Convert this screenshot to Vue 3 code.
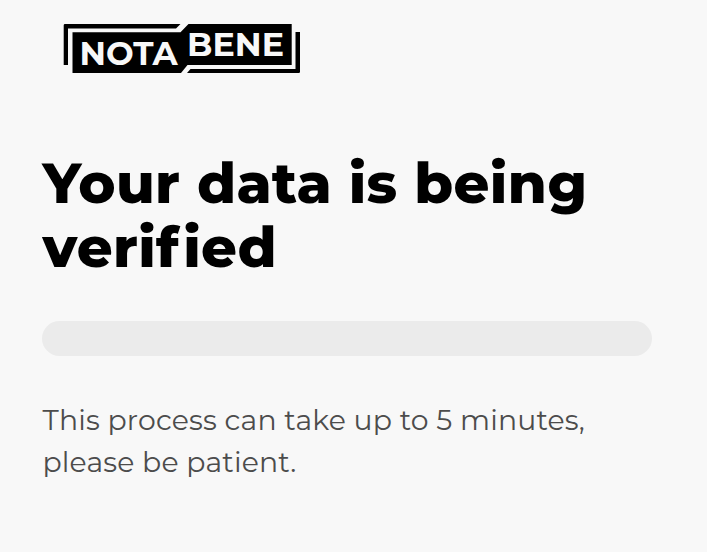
<script setup>
</script>

<template>
  <main class="page">
    <svg class="logo" width="238" height="52" viewBox="62 22 238 52" role="img" aria-label="Nota Bene">
      <path class="ink" d="M63.7 25.2Q63.7 24 65 24H180.5L176 28.6H68V65H63.7Z" />
      <path class="ink" d="M72.5 32.2H180.5L188.5 24H291.7V65H187.5L181 73H72.5Z" />
      <path class="ink" d="M295.5 32H300V71.8Q300 73 298.8 73H187L190.5 69H295.5Z" />
      <text x="79.5" y="65" textLength="98" lengthAdjust="spacingAndGlyphs">NOTA</text>
      <text x="187" y="55.9" textLength="97" lengthAdjust="spacingAndGlyphs">BENE</text>
    </svg>
    <h1 class="title">Your data is being<br />veri<span class="f">f</span>ied</h1>
    <div class="progress" role="progressbar"></div>
    <p class="note">This process can take up to 5 minutes,<br />please be patient.</p>
  </main>
</template>

<style>
body { background: #f8f8f8; }
</style>

<style scoped>
.page {
  box-sizing: border-box;
  height: 552px;
  padding: 22px 55px 0 42px;
  font-family: Montserrat, Inter, sans-serif;
  background: #f8f8f8;
}
.logo { display: block; margin-left: 20px; }
.ink { fill: #000; }
.logo text { fill: #f8f8f8; font: 700 33px Montserrat, Inter, sans-serif; }
.title {
  margin: 77px 0 0;
  padding-left: 0.5px;
  font-size: 56px;
  font-weight: 800;
  line-height: 64px;
  letter-spacing: 0.37px;
  font-variant-ligatures: none;
  color: #000;
  white-space: nowrap;
}
.f { margin-right: 4px; }
.progress { height: 35px; margin-top: 42px; border-radius: 18px; background: #ebebeb; }
.note {
  margin: 43px 0 0;
  padding-left: 0.5px;
  font-size: 28.3px;
  font-weight: 400;
  line-height: 42.4px;
  letter-spacing: 0.16px;
  color: #4c4c4c;
  white-space: nowrap;
}
</style>
